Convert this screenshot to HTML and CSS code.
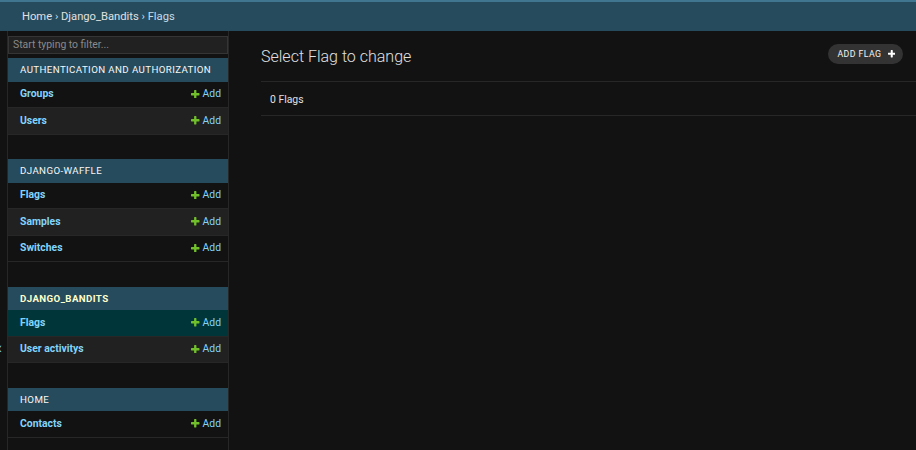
FILE: index.html
```html
<!DOCTYPE html>
<html lang="en">
<head>
<meta charset="utf-8">
<title>Select Flag to change</title>
<link rel="stylesheet" href="styles.css">
</head>
<body>
<div class="header-strip"></div>
<nav class="breadcrumbs"><a href="#">Home</a> › <a href="#">Django_Bandits</a> › Flags</nav>
<div class="main">
  <div class="toggle"><span class="toggle-glyph">«</span></div>
  <aside class="sidebar">
    <input class="filter" type="text" placeholder="Start typing to filter...">
    <div class="module">
      <div class="caption">Authentication and Authorization</div>
      <div class="row"><a class="model" href="#">Groups</a><a class="add" href="#"><svg viewBox="192 192 1408 1408"><path d="M1600 796v192q0 40-28 68t-68 28h-416v416q0 40-28 68t-68 28h-192q-40 0-68-28t-28-68v-416h-416q-40 0-68-28t-28-68v-192q0-40 28-68t68-28h416v-416q0-40 28-68t68-28h192q40 0 68 28t28 68v416h416q40 0 68 28t28 68z"/></svg>Add</a></div>
      <div class="row alt"><a class="model" href="#">Users</a><a class="add" href="#"><svg viewBox="192 192 1408 1408"><path d="M1600 796v192q0 40-28 68t-68 28h-416v416q0 40-28 68t-68 28h-192q-40 0-68-28t-28-68v-416h-416q-40 0-68-28t-28-68v-192q0-40 28-68t68-28h416v-416q0-40 28-68t68-28h192q40 0 68 28t28 68v416h416q40 0 68 28t28 68z"/></svg>Add</a></div>
    </div>
    <div class="module">
      <div class="caption">django-waffle</div>
      <div class="row"><a class="model" href="#">Flags</a><a class="add" href="#"><svg viewBox="192 192 1408 1408"><path d="M1600 796v192q0 40-28 68t-68 28h-416v416q0 40-28 68t-68 28h-192q-40 0-68-28t-28-68v-416h-416q-40 0-68-28t-28-68v-192q0-40 28-68t68-28h416v-416q0-40 28-68t68-28h192q40 0 68 28t28 68v416h416q40 0 68 28t28 68z"/></svg>Add</a></div>
      <div class="row alt"><a class="model" href="#">Samples</a><a class="add" href="#"><svg viewBox="192 192 1408 1408"><path d="M1600 796v192q0 40-28 68t-68 28h-416v416q0 40-28 68t-68 28h-192q-40 0-68-28t-28-68v-416h-416q-40 0-68-28t-28-68v-192q0-40 28-68t68-28h416v-416q0-40 28-68t68-28h192q40 0 68 28t28 68v416h416q40 0 68 28t28 68z"/></svg>Add</a></div>
      <div class="row"><a class="model" href="#">Switches</a><a class="add" href="#"><svg viewBox="192 192 1408 1408"><path d="M1600 796v192q0 40-28 68t-68 28h-416v416q0 40-28 68t-68 28h-192q-40 0-68-28t-28-68v-416h-416q-40 0-68-28t-28-68v-192q0-40 28-68t68-28h416v-416q0-40 28-68t68-28h192q40 0 68 28t28 68v416h416q40 0 68 28t28 68z"/></svg>Add</a></div>
    </div>
    <div class="module current">
      <div class="caption">Django_Bandits</div>
      <div class="row selected"><a class="model" href="#">Flags</a><a class="add" href="#"><svg viewBox="192 192 1408 1408"><path d="M1600 796v192q0 40-28 68t-68 28h-416v416q0 40-28 68t-68 28h-192q-40 0-68-28t-28-68v-416h-416q-40 0-68-28t-28-68v-192q0-40 28-68t68-28h416v-416q0-40 28-68t68-28h192q40 0 68 28t28 68v416h416q40 0 68 28t28 68z"/></svg>Add</a></div>
      <div class="row alt"><a class="model" href="#">User activitys</a><a class="add" href="#"><svg viewBox="192 192 1408 1408"><path d="M1600 796v192q0 40-28 68t-68 28h-416v416q0 40-28 68t-68 28h-192q-40 0-68-28t-28-68v-416h-416q-40 0-68-28t-28-68v-192q0-40 28-68t68-28h416v-416q0-40 28-68t68-28h192q40 0 68 28t28 68v416h416q40 0 68 28t28 68z"/></svg>Add</a></div>
    </div>
    <div class="module">
      <div class="caption">Home</div>
      <div class="row"><a class="model" href="#">Contacts</a><a class="add" href="#"><svg viewBox="192 192 1408 1408"><path d="M1600 796v192q0 40-28 68t-68 28h-416v416q0 40-28 68t-68 28h-192q-40 0-68-28t-28-68v-416h-416q-40 0-68-28t-28-68v-192q0-40 28-68t68-28h416v-416q0-40 28-68t68-28h192q40 0 68 28t28 68v416h416q40 0 68 28t28 68z"/></svg>Add</a></div>
    </div>
  </aside>
  <main class="content">
    <div class="content-head">
      <h1 class="title">Select Flag to change</h1>
      <a class="addbtn" href="#">Add Flag<svg viewBox="192 192 1408 1408"><path d="M1600 796v192q0 40-28 68t-68 28h-416v416q0 40-28 68t-68 28h-192q-40 0-68-28t-28-68v-416h-416q-40 0-68-28t-28-68v-192q0-40 28-68t68-28h416v-416q0-40 28-68t68-28h192q40 0 68 28t28 68v416h416q40 0 68 28t28 68z"/></svg></a>
    </div>
    <p class="paginator">0 Flags</p>
  </main>
</div>
</body>
</html>
```
FILE: styles.css
```css
html, body {
  margin: 0;
  padding: 0;
  background: #121212;
  color: #eeeeee;
  font-family: Roboto, "Liberation Sans", sans-serif;
  height: 100%;
  overflow: hidden;
}
a { text-decoration: none; }

.header-strip {
  height: 2px;
  background: #417690;
}

.breadcrumbs {
  height: 29px;
  box-sizing: border-box;
  padding: 0 22px;
  line-height: 29px;
  background: #264b5d;
  color: #c4dce8;
  font-size: 11.2px;
  white-space: nowrap;
}
.breadcrumbs a { color: #e0e0e0; }

.main {
  display: flex;
  align-items: flex-start;
  height: calc(100% - 31px);
}

.toggle {
  flex: 0 0 8px;
  width: 8px;
  height: 100%;
  box-sizing: border-box;
  border-right: 1px solid #272727;
  overflow: hidden;
  display: flex;
  justify-content: flex-end;
  align-items: flex-start;
  padding-top: 307px;
  padding-right: 5px;
}
.toggle-glyph {
  flex: 0 0 auto;
  color: #81d4fa;
  font-size: 16px;
  line-height: 20px;
}

.sidebar {
  flex: 0 0 221px;
  box-sizing: border-box;
  border-right: 1px solid #272727;
  display: block;
}

.filter {
  display: block;
  margin: 5px 0 4.5px;
  height: 17.5px;
  width: 220px;
  box-sizing: border-box;
  padding: 0 4px;
  border: 1px solid #353535;
  border-radius: 0;
  -webkit-appearance: none;
  appearance: none;
  background: #212121;
  color: #eeeeee;
  font-family: Roboto, "Liberation Sans", sans-serif;
  font-size: 10.4px;
  outline: none;
}
.filter::placeholder { color: #8a8a8a; }

.module {
  width: 220px;
  margin-bottom: 24.5px;
}
.caption {
  height: 23.5px;
  box-sizing: border-box;
  padding: 0 12px;
  display: flex;
  align-items: center;
  background: #264b5d;
  color: #f7f7f7;
  font-size: 9.7px;
  letter-spacing: 0.4px;
  text-transform: uppercase;
  white-space: nowrap;
}
.current .caption {
  color: #ffffcc;
  font-weight: 700;
}
.row {
  height: 26.5px;
  box-sizing: border-box;
  border-bottom: 1px solid #272727;
  padding: 0 7px 1px 12px;
  display: flex;
  align-items: center;
  justify-content: space-between;
}
.row.alt { background: #212121; }
.row.selected { background: #00363a; }
.model {
  color: #81d4fa;
  font-weight: 700;
  font-size: 10.4px;
}
.add {
  color: #81d4fa;
  font-size: 10.4px;
  display: flex;
  align-items: center;
  gap: 3px;
}
.add svg {
  width: 8.5px;
  height: 8.5px;
  fill: #70bf2b;
}

.content {
  flex: 1 1 auto;
  padding: 13px 0 0 32px;
}
.content-head {
  display: flex;
  justify-content: space-between;
  align-items: flex-start;
  padding-right: 13px;
}
.title {
  margin: 0;
  padding-top: 3px;
  font-weight: 300;
  font-size: 16px;
  line-height: 20px;
  color: #e0e0e0;
}
.addbtn {
  height: 20px;
  box-sizing: border-box;
  padding: 0 8px 0 9px;
  border-radius: 10px;
  background: #333333;
  color: #f2f2f2;
  font-size: 8.8px;
  letter-spacing: 0.4px;
  text-transform: uppercase;
  display: flex;
  align-items: center;
  gap: 6px;
}
.addbtn svg {
  width: 7.5px;
  height: 7.5px;
  fill: #ffffff;
}
.paginator {
  margin: 14px 0 0;
  height: 35px;
  box-sizing: border-box;
  border-top: 1px solid #272727;
  border-bottom: 1px solid #272727;
  padding: 1px 0 0 9px;
  display: flex;
  align-items: center;
  color: #e0e0e0;
  font-size: 10.4px;
}
```
